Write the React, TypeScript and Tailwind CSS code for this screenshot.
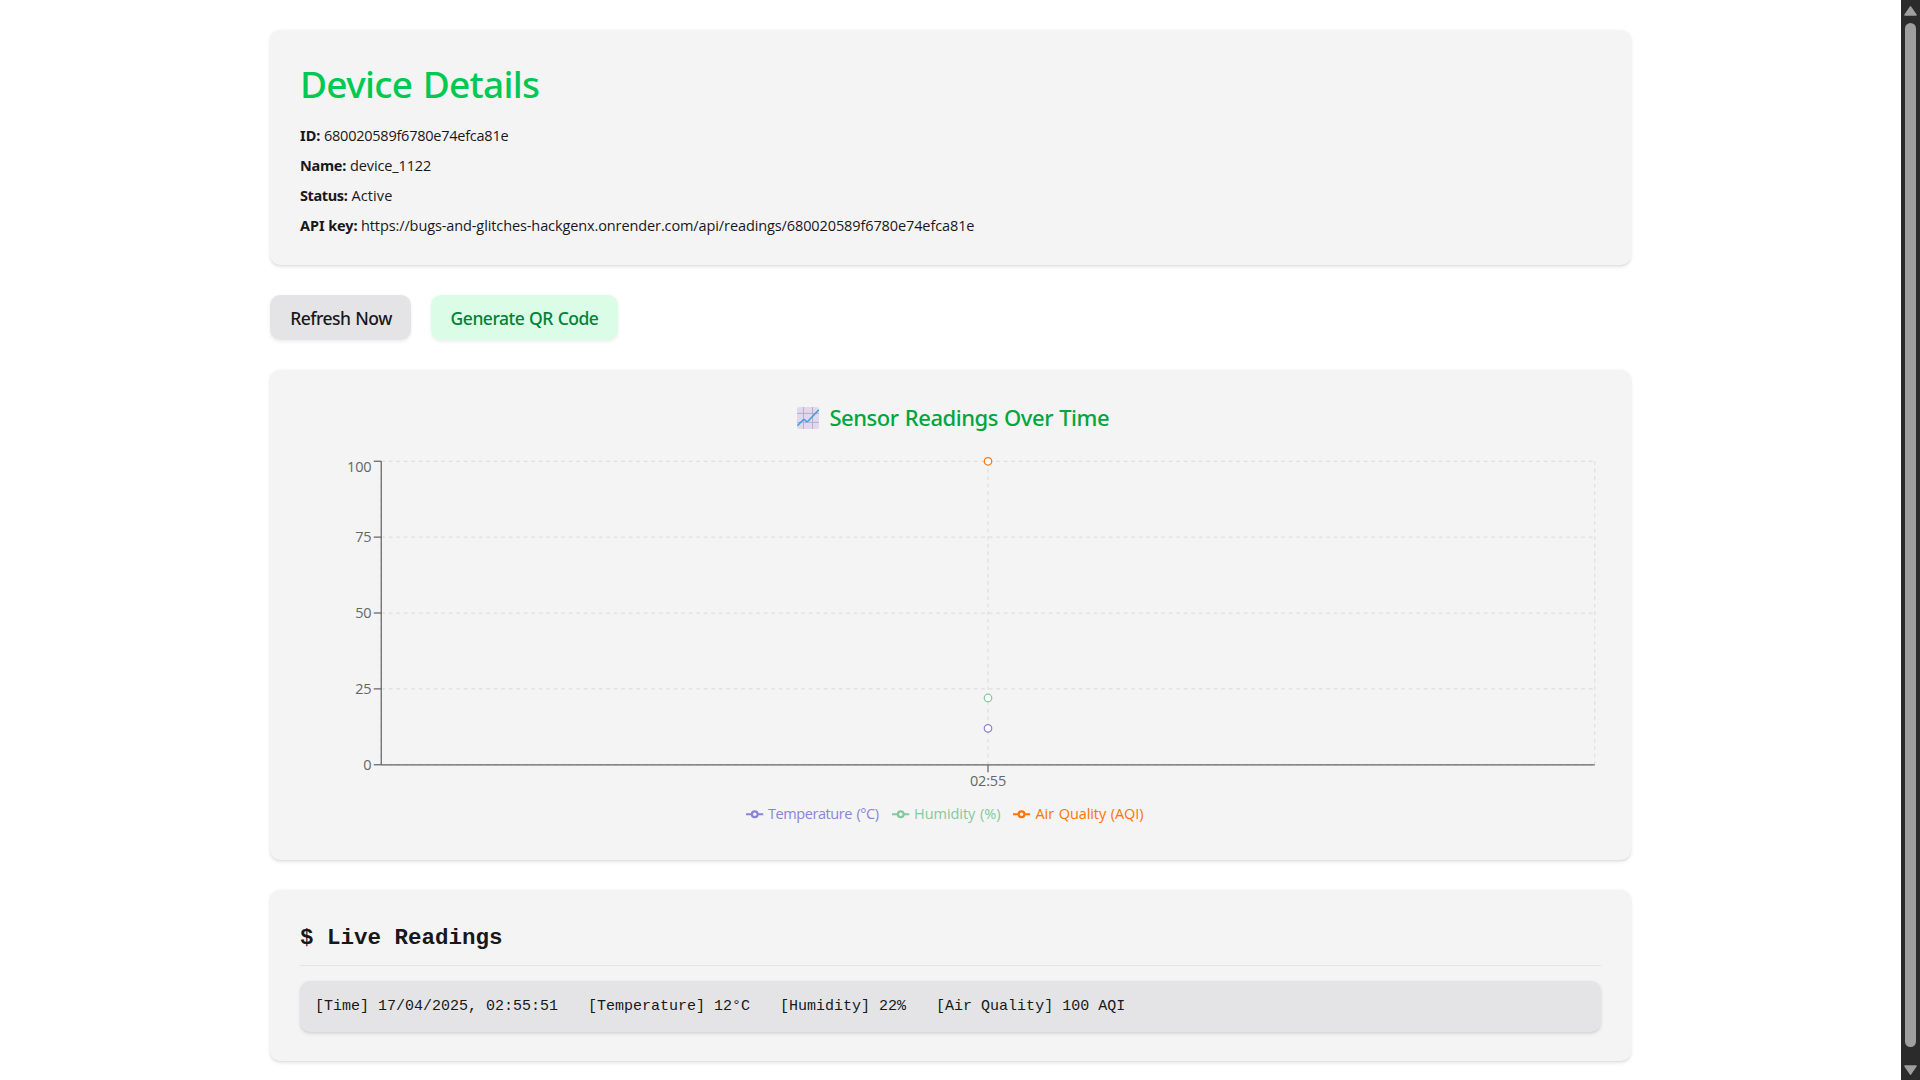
import React from "react";

const CARD =
  "rounded-[10px] bg-[#f4f4f4] px-[30px] shadow-[0_1.25px_3.75px_0_rgba(0,0,0,0.1),0_1.25px_2.5px_-1.25px_rgba(0,0,0,0.1)]";
const MEDIUM = "font-['Noto_Sans',sans-serif] font-medium";

const details = [
  { label: "ID:", labelCls: "w-[24px] tracking-[0.05px]", value: "680020589f6780e74efca81e", valueCls: "tracking-[-0.24px]" },
  { label: "Name:", labelCls: "w-[50px] tracking-[-0.27px]", value: "device_1122", valueCls: "tracking-[-0.12px]" },
  { label: "Status:", labelCls: "w-[51.5px] tracking-[-0.37px]", value: "Active", valueCls: "tracking-[0.1px]" },
  {
    label: "API key:",
    labelCls: "w-[61px] tracking-[-0.08px]",
    value: "https://bugs-and-glitches-hackgenx.onrender.com/api/readings/680020589f6780e74efca81e",
    valueCls: "tracking-[-0.105px]",
  },
];

const series = [
  { name: "Temperature (°C)", color: "#8884d8", value: 12, x: 446, tx: 468, width: 111 },
  { name: "Humidity (%)", color: "#82ca9d", value: 22, x: 592, tx: 614, width: 86.5 },
  { name: "Air Quality (AQI)", color: "#ff7300", value: 100, x: 712.8, tx: 735.5, width: 108 },
];

const ticks = [0, 25, 50, 75, 100];
const LEFT = 81.25;
const RIGHT = 1294.75;
const TOP = 6.25;
const BOTTOM = 309.75;
const MID = 688;
const yFor = (v: number) => BOTTOM - ((BOTTOM - TOP) * v) / 100;

function ChartIcon() {
  return (
    <svg width="22" height="22" viewBox="0 0 22 22" className="mt-[2px] mr-[10.5px] shrink-0">
      <rect width="22" height="22" rx="2.6" fill="#e1d8ec" />
      <path d="M6.5 0v22M15.5 0v22M0 6.4h22M0 15.4h22" stroke="#b9adc9" strokeWidth="1" fill="none" />
      <path d="M0.4 18.6L6.2 12.8Q7 12.1 7.8 12.9L9.2 14.2Q10.2 15 11.2 14L21.8 2.8" stroke="#3a9fe6" strokeWidth="1.5" fill="none" />
    </svg>
  );
}

function SensorChart() {
  return (
    <svg width="1301" height="375" viewBox="0 0 1301 375" className="block font-['Open_Sans',sans-serif] text-[14.5px]">
      <g stroke="#cccccc" strokeWidth="1.25" strokeDasharray="3.75 3.75" strokeOpacity="0.5">
        {ticks.map((t) => (
          <line key={t} x1={LEFT} x2={RIGHT} y1={yFor(t)} y2={yFor(t)} />
        ))}
        {[LEFT, MID, RIGHT].map((x) => (
          <line key={x} x1={x} x2={x} y1={TOP} y2={BOTTOM} />
        ))}
      </g>
      <g stroke="#666666" strokeWidth="1.25">
        <line x1={LEFT} x2={LEFT} y1={TOP} y2={BOTTOM} />
        <line x1={LEFT} x2={RIGHT} y1={BOTTOM} y2={BOTTOM} />
        <line x1={MID} x2={MID} y1={BOTTOM} y2={BOTTOM + 7.5} />
        {ticks.map((t) => (
          <line key={t} x1={LEFT - 7.5} x2={LEFT} y1={yFor(t)} y2={yFor(t)} />
        ))}
      </g>
      <g fill="#666666" textAnchor="end" className="tracking-[-0.12px]">
        {ticks.map((t) => (
          <text key={t} x={71.5} y={t === 100 ? 17 : yFor(t) + 5.2}>
            {t}
          </text>
        ))}
      </g>
      <text x={MID} y={331} fill="#666666" textAnchor="middle" className="tracking-[-0.2px]">
        02:55
      </text>
      {series.map((s) => (
        <circle key={s.name} cx={MID} cy={yFor(s.value)} r="3.75" fill="#ffffff" stroke={s.color} strokeWidth="1.25" />
      ))}
      {series.map((s) => (
        <g key={s.name}>
          <svg x={s.x} y={350.5} width="17.5" height="17.5" viewBox="0 0 32 32">
            <path
              fill="none"
              stroke={s.color}
              strokeWidth="4"
              d="M0,16h10.667A5.333,5.333,0,1,1,21.333,16H32M21.333,16A5.333,5.333,0,1,1,10.667,16"
            />
          </svg>
          <text x={s.tx} y={364} fill={s.color} textLength={s.width} className="[word-spacing:1px]">
            {s.name}
          </text>
        </g>
      ))}
    </svg>
  );
}

function Scrollbar() {
  return (
    <div className="flex h-full w-[19px] shrink-0 flex-col items-center bg-[#2b2b2b]">
      <svg width="13" height="10" viewBox="0 0 13 10" className="mt-[6px]">
        <path d="M6.5 0.8L12 9H1Z" fill="#9f9f9f" stroke="#9f9f9f" strokeWidth="1.5" strokeLinejoin="round" />
      </svg>
      <div className="mt-[7px] h-[1024px] w-[11px] rounded-full bg-[#9f9f9f]" />
      <svg width="13" height="10" viewBox="0 0 13 10" className="mt-[18px]">
        <path d="M6.5 9.2L12 1H1Z" fill="#9f9f9f" stroke="#9f9f9f" strokeWidth="1.5" strokeLinejoin="round" />
      </svg>
    </div>
  );
}

export default function App() {
  return (
    <div className="flex h-[1080px] w-[1920px] overflow-hidden bg-white text-[#18181b]">
      <main className="flex flex-1 flex-col items-center pt-[30px] font-['Open_Sans',sans-serif]">
        <div className="flex w-[1361px] flex-col gap-[30px]">
          <section className={`${CARD} h-[235px] pt-[30px]`}>
            <h1 className={`${MEDIUM} text-[37px] leading-[47px] tracking-[-0.7px] text-[#00c951] [word-spacing:1.5px]`}>Device Details</h1>
            <div className="mt-[13px] text-[14.5px] leading-[30px]">
              {details.map((d) => (
                <p key={d.label} className="flex h-[30px] items-baseline whitespace-nowrap">
                  <strong className={`shrink-0 font-['Noto_Sans',sans-serif] font-bold ${d.labelCls}`}>{d.label}</strong>
                  <span className={d.valueCls}>{d.value}</span>
                </p>
              ))}
            </div>
          </section>

          <div className="flex h-[45px] gap-5">
            <button className={`${MEDIUM} h-[45px] w-[141px] whitespace-nowrap rounded-[10px] bg-[#e4e4e6] pt-px pl-px text-[17.5px] tracking-[-0.55px] shadow-[0_1.25px_3.75px_0_rgba(0,0,0,0.07)] [word-spacing:1px]`}>
              Refresh Now
            </button>
            <button className={`${MEDIUM} h-[45px] w-[187px] whitespace-nowrap rounded-[10px] bg-[#dbfce7] pt-px text-[17.5px] tracking-[-0.5px] text-[#008236] shadow-[0_1.25px_3.75px_0_rgba(0,0,0,0.07)] [word-spacing:0.8px]`}>
              Generate QR Code
            </button>
          </div>

          <section className={`${CARD} h-[490px] pt-[30px]`}>
            <h2 className={`${MEDIUM} mb-[21px] flex h-[34px] items-center justify-center pl-[5px] text-[22px] leading-[34px] tracking-[-0.46px] text-[#00a63e] [word-spacing:0.9px]`}>
              <ChartIcon />
              Sensor Readings Over Time
            </h2>
            <SensorChart />
          </section>

          <section className={`${CARD} h-[171px] pt-[30px] font-['Liberation_Mono',monospace]`}>
            <h2 className="h-[46px] border-b border-[#e4e4e7] text-[22.5px] font-bold leading-[36px]">$ Live Readings</h2>
            <div className="mt-[15px] flex h-[51px] items-center gap-[30px] whitespace-nowrap rounded-[10px] bg-[#e4e4e6] px-[15px] pt-[2px] text-[15px] shadow-[0_1.25px_3.75px_0_rgba(0,0,0,0.1),0_1.25px_2.5px_-1.25px_rgba(0,0,0,0.1)]">
              <span>[Time] 17/04/2025, 02:55:51</span>
              <span>[Temperature] 12°C</span>
              <span>[Humidity] 22%</span>
              <span>[Air Quality] 100 AQI</span>
            </div>
          </section>
        </div>
      </main>
      <Scrollbar />
    </div>
  );
}
